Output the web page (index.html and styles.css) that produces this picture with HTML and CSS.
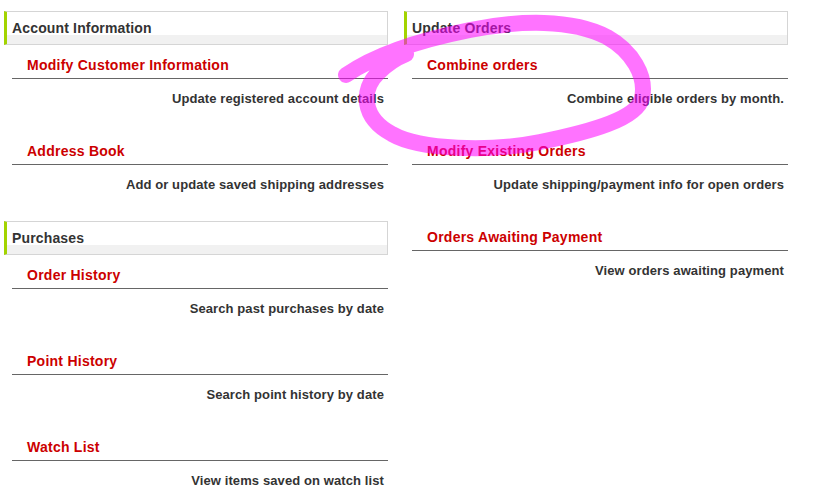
FILE: index.html
```html
<!DOCTYPE html>
<html lang="en">

<head>
    <meta charset="UTF-8">
    <meta name="viewport" content="width=device-width, initial-scale=1.0">
    <title>My Account</title>
    <link rel="stylesheet" href="styles.css">
</head>

<body>
    <div class="menu">
        <!-- left column -->
        <div class="col">
            <div class="section">
                <h3 class="section-title">Account Information</h3>
                <div class="item">
                    <a href="#" class="item-link">Modify Customer Information</a>
                    <p class="item-desc">Update registered account details</p>
                </div>
                <div class="item">
                    <a href="#" class="item-link">Address Book</a>
                    <p class="item-desc">Add or update saved shipping addresses</p>
                </div>
            </div>
            <div class="section">
                <h3 class="section-title">Purchases</h3>
                <div class="item">
                    <a href="#" class="item-link">Order History</a>
                    <p class="item-desc">Search past purchases by date</p>
                </div>
                <div class="item">
                    <a href="#" class="item-link">Point History</a>
                    <p class="item-desc">Search point history by date</p>
                </div>
                <div class="item">
                    <a href="#" class="item-link">Watch List</a>
                    <p class="item-desc">View items saved on watch list</p>
                </div>
            </div>
        </div>
        <!-- right column -->
        <div class="col">
            <div class="section">
                <h3 class="section-title">Update Orders</h3>
                <div class="item">
                    <a href="#" class="item-link">Combine orders</a>
                    <p class="item-desc">Combine eligible orders by month.</p>
                </div>
                <div class="item">
                    <a href="#" class="item-link">Modify Existing Orders</a>
                    <p class="item-desc">Update shipping/payment info for open orders</p>
                </div>
                <div class="item">
                    <a href="#" class="item-link">Orders Awaiting Payment</a>
                    <p class="item-desc">View orders awaiting payment</p>
                </div>
            </div>
        </div>
    </div>

    <!-- marker scribble on top -->
    <svg class="scribble" width="818" height="503" viewBox="0 0 818 503">
        <path d="M346,75 C375,55 420,40 470,30 C520,20 572,19 607,37 C632,51 647,76 642,98 C637,119 590,132 540,142 C490,152 420,150 392,134 C362,118 360,90 379,72 C387,64 396,58 406,54"
            fill="none" stroke="#ff00ff" stroke-opacity="0.55" stroke-width="16" stroke-linecap="round" stroke-linejoin="round" />
    </svg>
</body>

</html>
```

FILE: styles.css
```css
body {
    margin: 0;
    font-family: "Liberation Sans", Arial, sans-serif;
    background-color: #fff;
}

.menu {
    display: grid;
    grid-template-columns: 384px 384px;
    column-gap: 16px;
    padding: 11px 4px;
}

.section + .section {
    margin-top: 26px;
}

.section-title {
    margin: 0;
    height: 32px;
    padding-left: 5px;
    line-height: 32px;
    font-size: 14px;
    font-weight: bold;
    letter-spacing: .15px;
    color: #333;
    border: 1px solid #d5d5d5;
    border-left: 3px solid #a3d400;
    /* light band along the bottom */
    background: linear-gradient(to bottom, #fff 0, #fff 23px, #f1f1f1 23px);
}

.item {
    margin: 10px 0 0 8px;
}

.item + .item {
    margin-top: 32px;
}

.item-link {
    display: block;
    padding: 0 0 3px 15px;
    line-height: 20px;
    font-size: 14px;
    font-weight: bold;
    letter-spacing: .25px;
    color: #cc0000;
    text-decoration: none;
    border-bottom: 1px solid #666;
}

.item-desc {
    margin: 10px 0 0;
    padding-right: 4px;
    line-height: 20px;
    font-size: 13px;
    font-weight: bold;
    letter-spacing: .1px;
    color: #333;
    text-align: right;
}

.scribble {
    position: absolute;
    top: 0;
    left: 0;
    pointer-events: none;
}
```
